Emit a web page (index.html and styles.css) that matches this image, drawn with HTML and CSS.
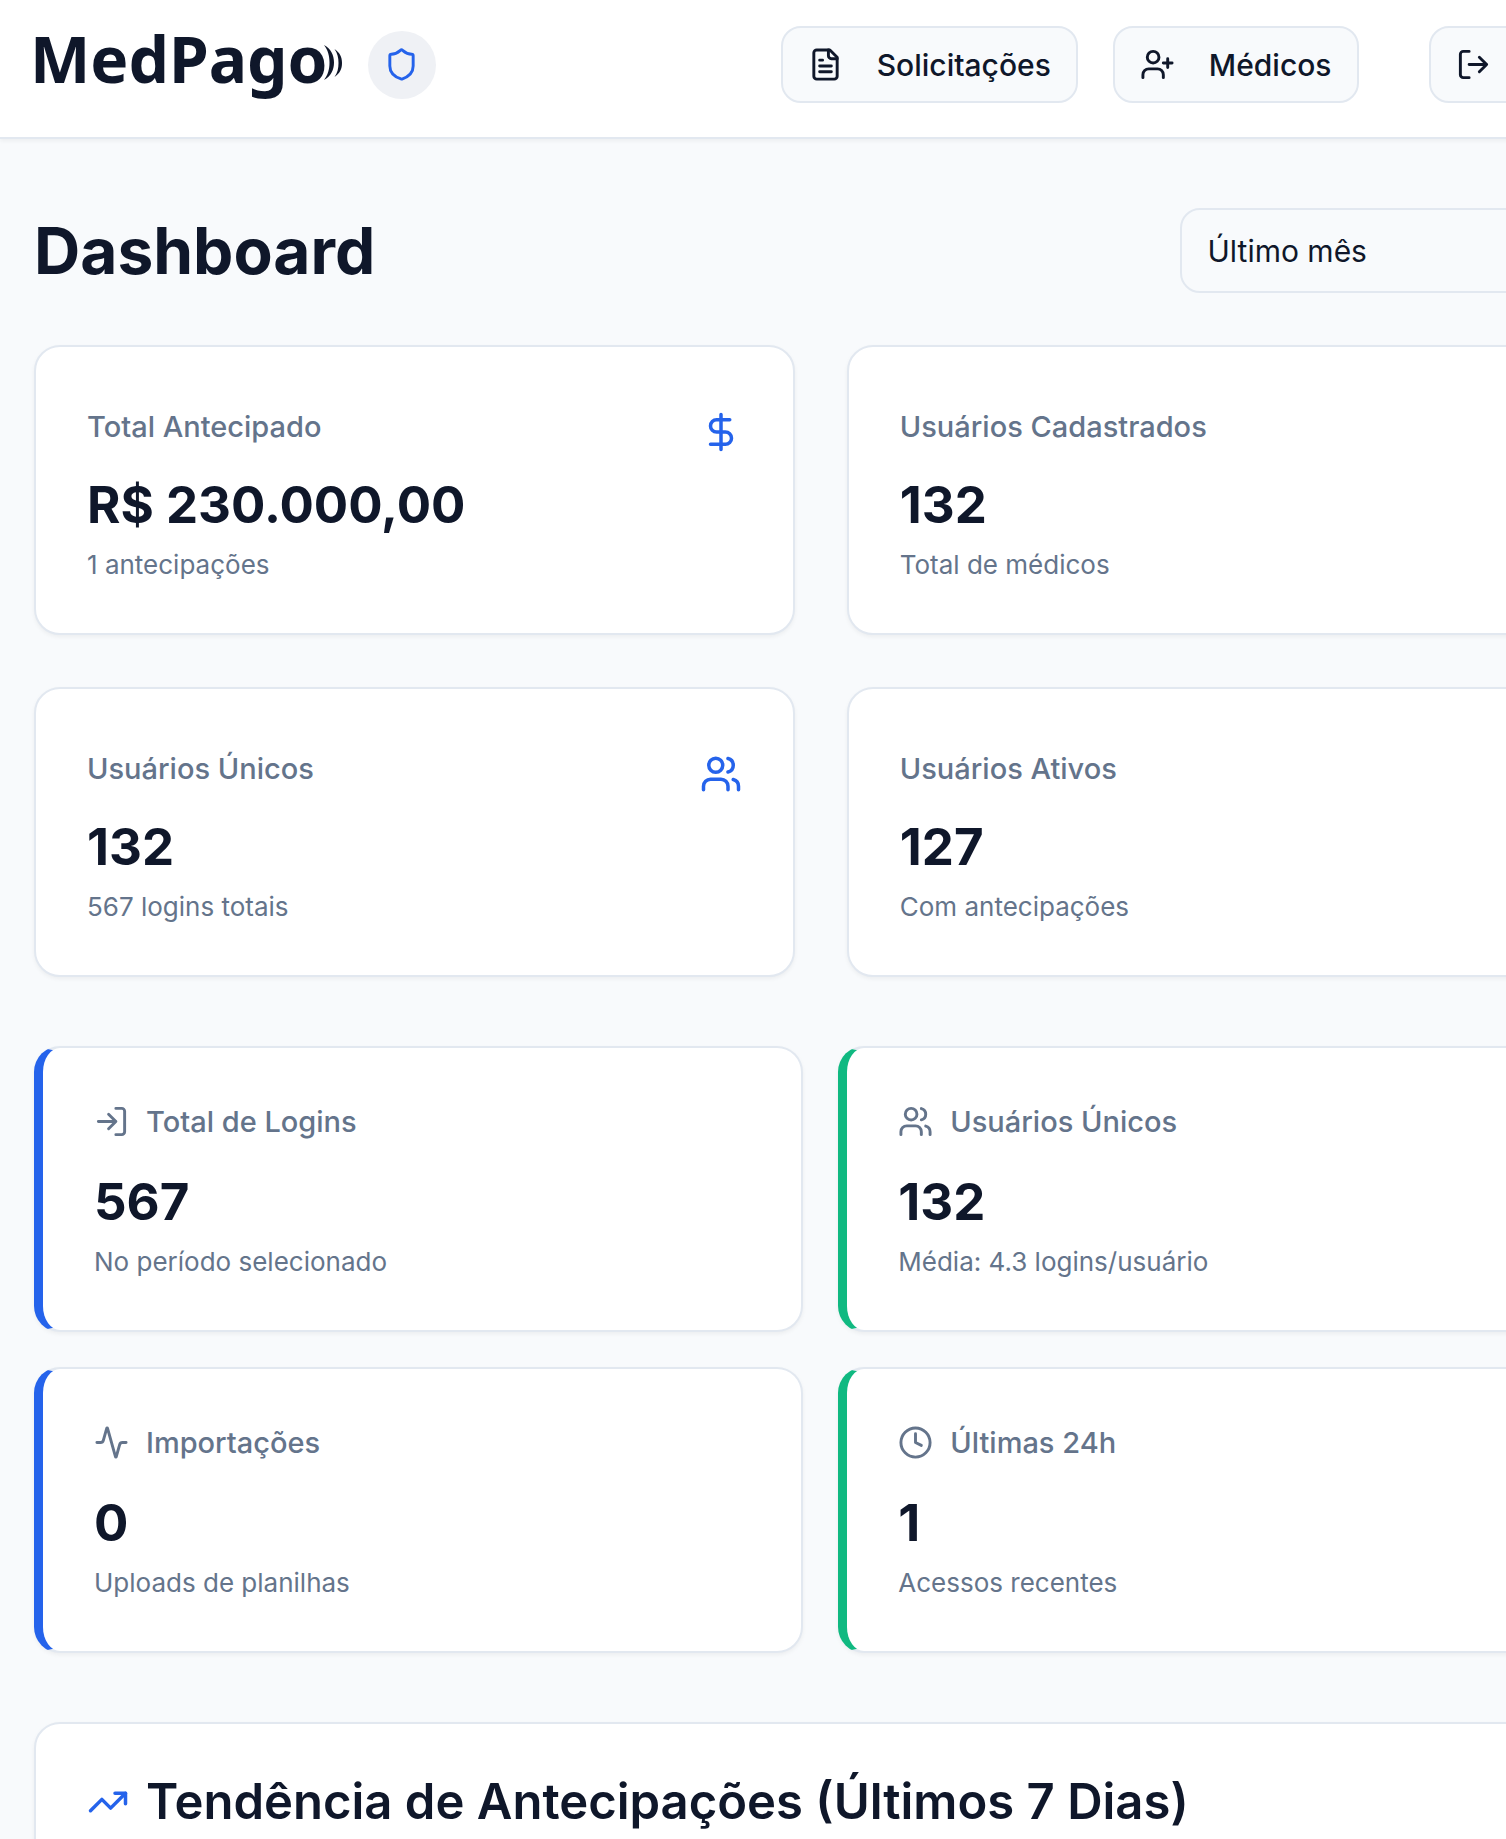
FILE: index.html
```html
<!DOCTYPE html>
<html lang="pt-BR">

<head>
  <meta charset="UTF-8">
  <meta name="viewport" content="width=device-width, initial-scale=1.0">
  <title>MedPago - Dashboard</title>
  <link rel="stylesheet" href="styles.css">
</head>

<body>
  <header class="topbar">
    <div class="brand">
      <span class="logo">MedPago</span>
      <svg class="waves" viewBox="0 0 18 36" aria-hidden="true">
        <path d="M0 0C7 4 10 10 10 17.500C10 25 7 31 0 35C4 30 5.500 24 5.500 17.500C5.500 11 4 5 0 0Z" />
        <path d="M10.500 4C16 8 18 12 18 18C18 24 16 28 10.500 32C13.500 28 14.500 23 14.500 18C14.500 13 13.500 8 10.500 4Z" />
      </svg>
      <span class="role">
        <svg class="icon" viewBox="0 0 24 24"><path d="M20 13c0 5-3.5 7.5-7.66 8.95a1 1 0 0 1-.67-.01C7.5 20.5 4 18 4 13V6a1 1 0 0 1 1-1c2 0 4.5-1.2 6.24-2.72a1.17 1.17 0 0 1 1.52 0C14.51 3.81 17 5 19 5a1 1 0 0 1 1 1z" /></svg>
      </span>
    </div>
    <nav class="menu">
      <button class="btn" type="button">
        <svg class="icon" viewBox="0 0 24 24"><path d="M15 2H6a2 2 0 0 0-2 2v16a2 2 0 0 0 2 2h12a2 2 0 0 0 2-2V7Z" /><path d="M14 2v4a2 2 0 0 0 2 2h4M10 9H8M16 13H8M16 17H8" /></svg>
        Solicitações
      </button>
      <button class="btn" type="button">
        <svg class="icon" viewBox="0 0 24 24"><path d="M16 21v-2a4 4 0 0 0-4-4H6a4 4 0 0 0-4 4v2" /><circle cx="9" cy="7" r="4" /><path d="M19 8v6M22 11h-6" /></svg>
        Médicos
      </button>
      <button class="btn btn-exit" type="button" aria-label="Sair">
        <svg class="icon" viewBox="0 0 24 24"><path d="M9 21H5a2 2 0 0 1-2-2V5a2 2 0 0 1 2-2h4M16 17l5-5-5-5M21 12H9" /></svg>
      </button>
    </nav>
  </header>

  <main class="content">
    <div class="page-head">
      <h1>Dashboard</h1>
      <select class="period" aria-label="Período">
        <option>Último mês</option>
      </select>
    </div>

    <section class="stats">
      <div class="card">
        <div class="card-head">
          <h2 class="label">Total Antecipado</h2>
          <svg class="icon icon-lg" viewBox="0 0 24 24"><path d="M12 2v20M17 5H9.5a3.5 3.5 0 0 0 0 7h5a3.5 3.5 0 0 1 0 7H6" /></svg>
        </div>
        <p class="value">R$ 230.000,00</p>
        <p class="note">1 antecipações</p>
      </div>
      <div class="card">
        <div class="card-head">
          <h2 class="label">Usuários Cadastrados</h2>
        </div>
        <p class="value">132</p>
        <p class="note">Total de médicos</p>
      </div>
      <div class="card">
        <div class="card-head">
          <h2 class="label">Usuários Únicos</h2>
          <svg class="icon icon-lg" viewBox="0 0 24 24"><path d="M16 21v-2a4 4 0 0 0-4-4H6a4 4 0 0 0-4 4v2" /><circle cx="9" cy="7" r="4" /><path d="M22 21v-2a4 4 0 0 0-3-3.87M16 3.13a4 4 0 0 1 0 7.75" /></svg>
        </div>
        <p class="value">132</p>
        <p class="note">567 logins totais</p>
      </div>
      <div class="card">
        <div class="card-head">
          <h2 class="label">Usuários Ativos</h2>
        </div>
        <p class="value">127</p>
        <p class="note">Com antecipações</p>
      </div>
    </section>

    <section class="access">
      <div class="card card-blue">
        <h2 class="label">
          <svg class="icon" viewBox="0 0 24 24"><path d="M15 3h4a2 2 0 0 1 2 2v14a2 2 0 0 1-2 2h-4M10 17l5-5-5-5M15 12H3" /></svg>
          Total de Logins
        </h2>
        <p class="value">567</p>
        <p class="note">No período selecionado</p>
      </div>
      <div class="card card-green">
        <h2 class="label">
          <svg class="icon" viewBox="0 0 24 24"><path d="M16 21v-2a4 4 0 0 0-4-4H6a4 4 0 0 0-4 4v2" /><circle cx="9" cy="7" r="4" /><path d="M22 21v-2a4 4 0 0 0-3-3.87M16 3.13a4 4 0 0 1 0 7.75" /></svg>
          Usuários Únicos
        </h2>
        <p class="value">132</p>
        <p class="note">Média: 4.3 logins/usuário</p>
      </div>
      <div class="card card-blue">
        <h2 class="label">
          <svg class="icon" viewBox="0 0 24 24"><path d="M22 12h-2.48a2 2 0 0 0-1.93 1.46l-2.35 8.36a.25.25 0 0 1-.48 0L9.24 2.18a.25.25 0 0 0-.48 0l-2.35 8.36A2 2 0 0 1 4.49 12H2" /></svg>
          Importações
        </h2>
        <p class="value">0</p>
        <p class="note">Uploads de planilhas</p>
      </div>
      <div class="card card-green">
        <h2 class="label">
          <svg class="icon" viewBox="0 0 24 24"><circle cx="12" cy="12" r="10" /><path d="M12 6v6l4 2" /></svg>
          Últimas 24h
        </h2>
        <p class="value">1</p>
        <p class="note">Acessos recentes</p>
      </div>
    </section>

    <section class="card trend">
      <h2 class="trend-title">
        <svg class="icon icon-lg" viewBox="0 0 24 24"><path d="m22 7-8.5 8.5-5-5L2 17" /><path d="M16 7h6v6" /></svg>
        Tendência de Antecipações (Últimos 7 Dias)
      </h2>
    </section>
  </main>
</body>

</html>
```
FILE: styles.css
```css
* {
  box-sizing: border-box;
}

body {
  margin: 0;
  height: 100vh;
  overflow: hidden;
  background-color: #f8fafc;
  color: #0f172a;
  font-family: Inter, "Liberation Sans", sans-serif;
}

h1, h2, p {
  margin: 0;
}

.icon {
  width: 35px;
  height: 35px;
  flex: none;
  fill: none;
  stroke: currentColor;
  stroke-width: 2;
  stroke-linecap: round;
  stroke-linejoin: round;
}

.icon-lg {
  width: 42px;
  height: 42px;
  color: #2563eb;
}

/* header and content are wider than the window, the right side runs off */
.topbar,
.content {
  width: 109%;
  padding: 0 34px;
}

.topbar {
  display: flex;
  justify-content: space-between;
  align-items: flex-start;
  padding-top: 26px;
  padding-bottom: 34px;
  padding-left: 30px;
  background-color: #fff;
  border-bottom: 2px solid #e2e8f0;
  box-shadow: 0 2px 4px rgba(0, 0, 0, 0.05);
}

.brand {
  display: flex;
  align-items: center;
  height: 77px;
}

.logo {
  padding-bottom: 12px;
  font-family: "Noto Sans", sans-serif;
  font-size: 64px;
  font-weight: 700;
  line-height: 64px;
}

.waves {
  width: 18px;
  height: 36px;
  margin-left: -4px;
  margin-bottom: 4px;
  fill: #0f172a;
}

.role {
  display: flex;
  align-items: center;
  justify-content: center;
  width: 68px;
  height: 68px;
  margin-left: 26px;
  border-radius: 50%;
  background-color: #eff1f5;
  color: #2563eb;
}

.menu {
  display: flex;
  gap: 35px;
}

.btn {
  display: flex;
  align-items: center;
  gap: 34px;
  height: 77px;
  padding: 0 25px;
  border: 2px solid #e2e8f0;
  border-radius: 20px;
  background-color: #f8fafc;
  color: #0f172a;
  font: 500 30px Inter, sans-serif;
}

.btn-exit {
  width: 179px;
  margin-left: 35px;
}

.content {
  display: flex;
  flex-direction: column;
  gap: 69px;
  padding-top: 69px;
}

.page-head {
  display: flex;
  justify-content: space-between;
  align-items: center;
  margin-bottom: -17px;
}

h1 {
  font-size: 64px;
  line-height: 80px;
  font-weight: 700;
}

.period {
  width: 428px;
  height: 85px;
  padding: 0 26px;
  appearance: none;
  border: 2px solid #e2e8f0;
  border-radius: 20px;
  background-color: #f8fafc;
  color: #0f172a;
  font: 400 30px Inter, sans-serif;
}

.stats,
.access {
  display: grid;
  grid-template-columns: 1fr 1fr;
}

.stats {
  gap: 52px;
}

.access {
  gap: 35px;
}

.card {
  padding: 51px;
  border: 2px solid #e2e8f0;
  border-radius: 26px;
  background-color: #fff;
  box-shadow: 0 2px 4px rgba(0, 0, 0, 0.05);
}

.card-blue {
  border-left: 9px solid #2563eb;
}

.card-green {
  border-left: 9px solid #10b981;
}

.card-head {
  display: flex;
  justify-content: space-between;
  height: 64px;
  padding-top: 6px;
  margin-bottom: 8px;
}

.card-head .icon {
  margin-top: 7px;
}

.label {
  display: flex;
  align-items: center;
  gap: 17px;
  height: 44px;
  color: #64748b;
  font-size: 29px;
  font-weight: 500;
}

.access .label {
  margin-bottom: 24px;
}

.value {
  font-size: 51px;
  line-height: 70px;
  font-weight: 700;
}

.note {
  margin-top: 7px;
  color: #64748b;
  font-size: 26px;
  line-height: 35px;
}

.trend {
  min-height: 400px;
}

.trend-title {
  display: flex;
  align-items: center;
  gap: 17px;
  font-size: 49px;
  line-height: 53px;
  font-weight: 600;
}
```
